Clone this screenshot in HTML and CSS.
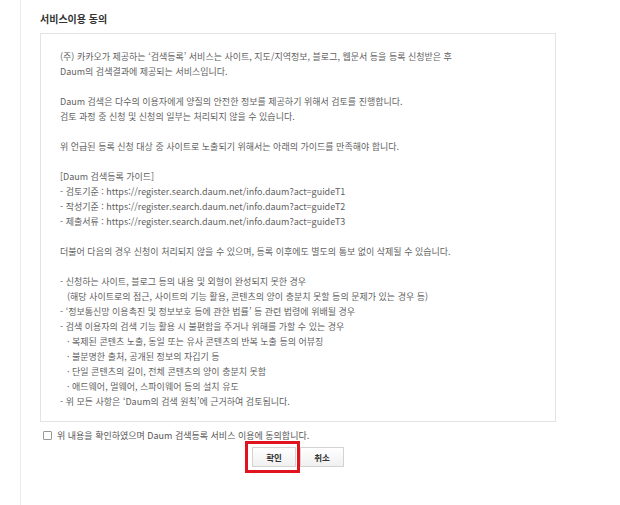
FILE: index.html
```html
<!DOCTYPE html>
<html lang="ko">
  <head>
    <meta charset="UTF-8" />
    <meta name="viewport" content="width=device-width, initial-scale=1.0" />
    <title>서비스이용 동의</title>
    <link rel="stylesheet" href="styles.css">
  </head>
  <body>
    <div class="wrap">
      <h2 class="title">서비스이용 동의</h2>
      <div class="terms">
        <p>(주) 카카오가 제공하는 ‘검색등록’ 서비스는 사이트, 지도/지역정보, 블로그, 웹문서 등을 등록 신청받은 후<br>Daum의 검색결과에 제공되는 서비스입니다.</p>
        <p>Daum 검색은 다수의 이용자에게 양질의 안전한 정보를 제공하기 위해서 검토를 진행합니다.<br>검토 과정 중 신청 및 신청의 일부는 처리되지 않을 수 있습니다.</p>
        <p>위 언급된 등록 신청 대상 중 사이트로 노출되기 위해서는 아래의 가이드를 만족해야 합니다.</p>
        <p>[Daum 검색등록 가이드]<br>- 검토기준 : https://register.search.daum.net/info.daum?act=guideT1<br>- 작성기준 : https://register.search.daum.net/info.daum?act=guideT2<br>- 제출서류 : https://register.search.daum.net/info.daum?act=guideT3</p>
        <p>더불어 다음의 경우 신청이 처리되지 않을 수 있으며, 등록 이후에도 별도의 통보 없이 삭제될 수 있습니다.</p>
        <ul class="rules">
          <li>- 신청하는 사이트, 블로그 등의 내용 및 외형이 완성되지 못한 경우</li>
          <li class="sub">(해당 사이트로의 접근, 사이트의 기능 활용, 콘텐츠의 양이 충분치 못할 등의 문제가 있는 경우 등)</li>
          <li>- ‘정보통신망 이용촉진 및 정보보호 등에 관한 법률’ 등 관련 법령에 위배될 경우</li>
          <li>- 검색 이용자의 검색 기능 활용 시 불편함을 주거나 위해를 가할 수 있는 경우</li>
          <li class="sub">· 복제된 콘텐츠 노출, 동일 또는 유사 콘텐츠의 반복 노출 등의 어뷰징</li>
          <li class="sub">· 불분명한 출처, 공개된 정보의 자깁기 등</li>
          <li class="sub">· 단일 콘텐츠의 길이, 전체 콘텐츠의 양이 충분치 못함</li>
          <li class="sub">· 애드웨어, 멀웨어, 스파이웨어 등의 설치 유도</li>
          <li>- 위 모든 사항은 ‘Daum의 검색 원칙’에 근거하여 검토됩니다.</li>
        </ul>
      </div>
      <label class="agree">
        <span class="check"></span>
        위 내용을 확인하였으며 Daum 검색등록 서비스 이용에 동의합니다.
      </label>
      <div class="buttons">
        <button class="btn btn-ok">확인</button>
        <button class="btn">취소</button>
      </div>
    </div>
  </body>
</html>
```

FILE: styles.css
```css
* {
  margin: 0;
  padding: 0;
  box-sizing: border-box;
  font-family: "Noto Sans CJK KR", "Noto Sans", sans-serif;
}

body {
  background: #fff;
}

.wrap {
  margin-left: 20px;
  border-left: 1px solid #ebebeb;
  min-height: 505px;
  padding: 12px 0 0 19px;
}

.title {
  font-size: 10px;
  font-weight: bold;
  line-height: 14px;
  color: #333;
  margin-bottom: 7px;
}

.terms {
  width: 516px;
  border: 1px solid #e3e3e3;
  padding: 15px 18px 12px 19px;
  font-size: 9px;
  line-height: 15px;
  color: #5f5f5f;
}

.terms p {
  margin-bottom: 15px;
}

.rules li {
  list-style: none;
}

.rules li.sub {
  padding-left: 7px;
}

.agree {
  display: flex;
  align-items: center;
  gap: 5px;
  margin: 6px 0 0 3px;
  height: 14px;
  font-size: 9px;
  color: #555;
}

.check {
  width: 9px;
  height: 9px;
  border: 1px solid #999;
  border-radius: 1px;
  background: #fff;
}

.buttons {
  width: 516px;
  display: flex;
  justify-content: center;
  gap: 4px;
  margin-top: 5px;
}

.btn {
  width: 44px;
  height: 20px;
  border: 1px solid #d3d3d3;
  background: linear-gradient(#fff, #f0f0f0);
  font-size: 8.5px;
  font-weight: bold;
  color: #333;
  position: relative;
}

/* red highlight around the confirm button */
.btn-ok::after {
  content: "";
  position: absolute;
  top: -7px;
  bottom: -7px;
  left: -8px;
  right: -5px;
  border: 3px solid #e0141e;
}
```
